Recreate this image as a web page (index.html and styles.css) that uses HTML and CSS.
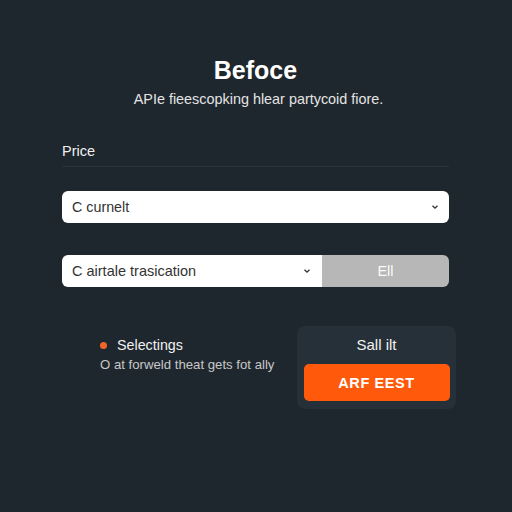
FILE: index.html
```html
<!DOCTYPE html>
<html>
<head>
<meta charset="utf-8">
<link rel="stylesheet" href="styles.css">
</head>
<body>
<div class="page">
  <header class="head">
    <h1 class="title">Befoce</h1>
    <p class="subtitle">APIe fieescopking hlear partycoid fiore.</p>
  </header>
  <section class="section">
    <div class="label">Price</div>
    <div class="divider"></div>
    <div class="select">
      <span>C curnelt</span>
      <svg class="chev" width="8" height="6" viewBox="0 0 8 6"><path d="M1.5 1.8 L4 4.2 L6.5 1.8" fill="none" stroke="#333" stroke-width="1.3"/></svg>
    </div>
    <div class="combo">
      <div class="combo-select">
        <span>C airtale trasication</span>
        <svg class="chev" width="8" height="6" viewBox="0 0 8 6"><path d="M1.5 1.8 L4 4.2 L6.5 1.8" fill="none" stroke="#333" stroke-width="1.3"/></svg>
      </div>
      <div class="combo-btn">Ell</div>
    </div>
  </section>
  <section class="bottom">
    <div class="info">
      <div class="info-title"><span class="dot"></span>Selectings</div>
      <div class="info-desc">O at forweld theat gets fot ally</div>
    </div>
    <div class="card">
      <div class="card-title">Sall ilt</div>
      <button class="cta">ARF EEST</button>
    </div>
  </section>
</div>
</body>
</html>
```
FILE: styles.css
```css
html, body { margin: 0; padding: 0; }
body {
  width: 512px; height: 512px; overflow: hidden;
  background: #1f272e;
  font-family: "Liberation Sans", Arial, sans-serif;
  color: #f2f2f2;
}
.page { padding: 0 63px 0 62px; }
.head { display: flex; flex-direction: column; align-items: center; padding-top: 55px; }
.title { margin: 0; font-size: 25px; font-weight: 700; line-height: 30px; color: #fff; }
.subtitle { margin: 6px 0 0 6px; font-size: 14.4px; line-height: 17px; color: #e4e4e4; }
.section { margin-top: 35px; }
.label { font-size: 14.5px; line-height: 17px; color: #f0f0f0; }
.divider { height: 1px; background: #2a343b; margin-top: 6px; }
.select {
  margin-top: 24px; height: 32px; background: #fff; border-radius: 6px;
  display: flex; align-items: center; justify-content: space-between;
  padding: 0 10px 0 10px; color: #333; font-size: 14.3px;
}
.combo { margin-top: 32px; height: 32px; display: flex; border-radius: 6px; overflow: hidden; }
.combo-select {
  flex: 0 0 260px; background: #fff; display: flex; align-items: center; justify-content: space-between;
  padding: 0 11px 0 10px; box-sizing: border-box; color: #333; font-size: 14.5px;
}
.combo-btn {
  flex: 1; background: #b7b7b7; color: #fafafa; font-size: 14.5px; display: flex; align-items: center; justify-content: center;
}
.bottom { display: flex; justify-content: space-between; margin-top: 39px; padding-left: 38px; margin-right: -7px; }
.info { padding-top: 11px; }
.info-title { display: flex; align-items: center; font-size: 14.3px; line-height: 17px; color: #f0f0f0; }
.dot { width: 7px; height: 7px; border-radius: 50%; background: #f0642a; margin-right: 10px; }
.info-desc { margin-top: 3px; font-size: 13.2px; line-height: 16px; color: #c8c8c8; }
.card {
  width: 159px; height: 83px; background: #263038; border-radius: 8px; box-sizing: border-box;
  padding: 10px 6px 0; display: flex; flex-direction: column; align-items: center;
}
.card-title { font-size: 15px; line-height: 18px; color: #f2f2f2; }
.cta {
  margin-top: 10px; width: 146px; height: 37px; border: 0; border-radius: 5px;
  background: #ff5a0b; color: #fff; font-family: inherit; font-size: 14.5px; font-weight: 700; letter-spacing: 0.6px;
}
```
